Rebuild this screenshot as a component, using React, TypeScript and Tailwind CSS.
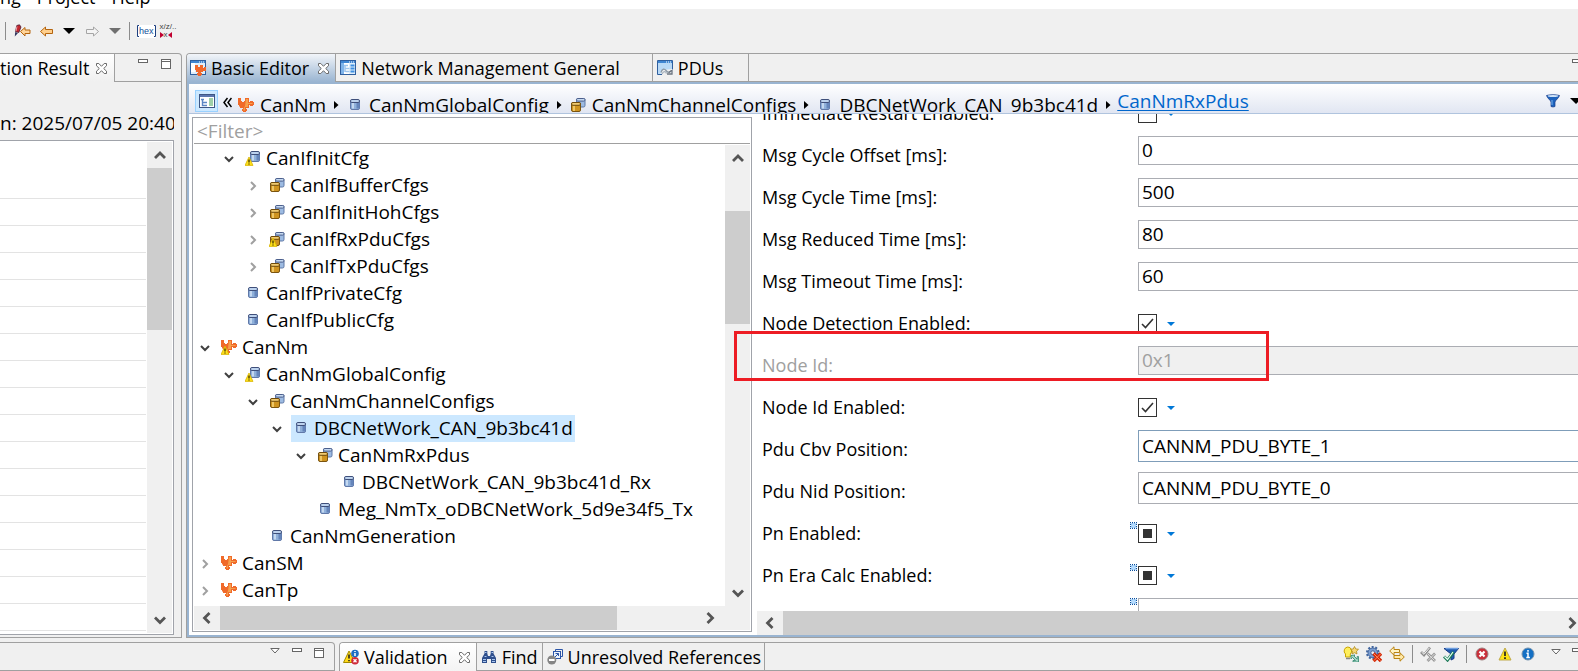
import { useEffect, useRef } from "react";
import type { ReactNode } from "react";

type Dir = "up" | "down" | "left" | "right";

/* ---------- icons ---------- */

function Svg({ w = 16, h = 16, children }: { w?: number; h?: number; children: ReactNode }) {
  return (
    <svg width={w} height={h} viewBox={`0 0 ${w} ${h}`} fill="none" className="shrink-0" aria-hidden="true">
      {children}
    </svg>
  );
}

const warnMark = (
  <g>
    <path d="M4 7 8 15.400H0Z" fill="#ffe11a" stroke="#d8b400" strokeWidth=".8" strokeLinejoin="round" />
    <path d="M4 9.500v3M4 13.400v1.100" stroke="#3a2f00" strokeWidth="1.300" />
  </g>
);

function Puzzle({ warn }: { warn?: boolean }) {
  return (
    <Svg>
      <path
        d="M0 1h3v3h1v1h2V4h1V1h4v4h1V4h3v1h1v3h-1v1h-3V8h-1v3H8v1h1v2H8v1H5v-1H4v-2h1v-1H2V9.500H1V8H0Z"
        fill="#f06a2a"
      />
      <path d="M8 2h2v4h4.500v1H10v3H7v3.500H5.500V12L7 9Z" fill="#f5a04c" />
      {warn && warnMark}
    </Svg>
  );
}

function Cylinder({ warn }: { warn?: boolean }) {
  const x = warn ? 2 : 0;
  return (
    <Svg>
      <g transform={`translate(${x} ${warn ? -2 : -1})`}>
        <rect x="3.500" y="4" width="9" height="9.500" rx="1.500" fill="#8fb0da" stroke="#6078a8" />
        <path d="M9.500 6.500h3v6h-3z" fill="#6585bb" />
        <path d="M5 6.500h2v6H5z" fill="#c4d8f0" />
        <rect x="3.500" y="3.500" width="9" height="3" rx="1.400" fill="#bcd2ee" stroke="#3f4f7a" />
      </g>
      {warn && warnMark}
    </Svg>
  );
}

function Cylinders({ warn }: { warn?: boolean }) {
  return (
    <Svg>
      <rect x="6.500" y="1.500" width="8.500" height="8.500" rx="1.500" fill="#9dbbe2" stroke="#5f78a6" />
      <rect x="6.500" y="1.500" width="8.500" height="2.600" rx="1.300" fill="#c4d8f0" stroke="#4c5f8c" />
      <rect x="1.500" y="5.500" width="9" height="9" rx="1.500" fill="#cf9420" stroke="#7a5410" />
      <path d="M3 8h2v6H3z" fill="#efc766" />
      <rect x="1.500" y="5.500" width="9" height="2.800" rx="1.400" fill="#f0cb72" stroke="#6f4a0a" />
      {warn && warnMark}
    </Svg>
  );
}

function WindowBase({ children }: { children: ReactNode }) {
  return (
    <Svg>
      <rect x=".5" y=".5" width="15" height="14" fill="#dfeefb" stroke="#2f5f9e" />
      <path d="M1 1h14v2H1z" fill="#3f86d2" />
      <path d="M9 2h1M11 2h1M13 2h1" stroke="#fff" />
      {children}
    </Svg>
  );
}

const BasicIcon = () => (
  <WindowBase>
    <path d="M1 3h4v9H1z" fill="#fff" />
    <path d="M5 5h3v2h2V5h3v3h1V7h2v4h-3v1h-2v1h1v2h-1v1H8v-1H7v-2h1v-1H6v-2H5Z" fill="#f0682c" />
  </WindowBase>
);

const FormIcon = () => (
  <WindowBase>
    <path d="M1 3h3v11H1z" fill="#7fb4ea" />
    <path d="M4 3h5v11H4z" fill="#fff" />
    <path d="M4 5.500h4M5.500 8.500h4M5.500 11.500h4M5 6v6" stroke="#9dc4ec" strokeWidth="1.500" />
    <path d="M10.500 5.500h4M10.500 8.500h4M10.500 11.500h4" stroke="#3f8fe0" strokeWidth="2" />
  </WindowBase>
);

const PduIcon = () => (
  <Svg>
    <path d="M.5.5h15v9M.5.5v14H5" fill="#dfeefb" stroke="#2f5f9e" />
    <path d="M1 1h14v2H1z" fill="#3f86d2" />
    <path d="M9 2h1M11 2h1M13 2h1" stroke="#fff" />
    <path d="M1 3h14v6L6 10 3 14H1Z" fill="#b9d9f6" />
    <path d="M4 12.500c1-4 3.500-4 5-2s3 2.500 5 .5" stroke="#8d99a5" strokeWidth="1.300" />
    <path d="M5 14c1.500-3 3.500-3 4.500-.5" stroke="#a5b1bd" strokeWidth="1.300" />
    <path d="M10 14h5v-4M12 12.500l2.500-2" stroke="#6b7480" strokeWidth="1.300" />
  </Svg>
);

const TreeToggleIcon = () => (
  <Svg>
    <rect x=".5" y="1.500" width="15" height="13" fill="#fff" stroke="#3e5684" />
    <path d="M1 2h14v2H1z" fill="#5b76ae" />
    <path d="M10 5h4v8h-4z" fill="#9fd0a8" />
    <path d="M2 6.500h3M4 9.500h4M5 12.500h3M3.500 7v5.500H5" stroke="#5b86c4" strokeWidth="1.400" />
  </Svg>
);

const CloseIcon = () => (
  <Svg w={11} h={11}>
    <path
      d="M.5.5h2.300L5.500 3.300 8.200.5h2.300v2.300L7.700 5.500l2.800 2.700v2.300H8.200L5.500 7.700l-2.700 2.800H.5V8.200l2.800-2.700L.5 2.800Z"
      stroke="#6a6a6a"
      fill="#fff"
    />
  </Svg>
);

const MinIcon = () => (
  <Svg w={10} h={4}>
    <rect x=".5" y=".5" width="9" height="3" fill="#fff" stroke="#666" />
  </Svg>
);

const MaxIcon = () => (
  <Svg w={10} h={10}>
    <rect x=".5" y=".5" width="9" height="9" fill="#fff" stroke="#666" />
    <path d="M0 2.500h10" stroke="#666" />
  </Svg>
);

const MenuTriangle = () => (
  <Svg w={10} h={6}>
    <path d="M.8.5h8.400L5 5Z" fill="#fff" stroke="#666" />
  </Svg>
);

const SolidTriangle = ({ gray }: { gray?: boolean }) => (
  <Svg w={12} h={6}>
    <path d="M0 0h12L6 6Z" fill={gray ? "#707070" : "#000"} />
  </Svg>
);

function Chevron({ dir }: { dir: Dir }) {
  const d = { up: "M2 10 7 5 12 10", down: "M2 4.500l5 5 5-5", left: "M9.500 2l-5 5 5 5", right: "M4.500 2l5 5-5 5" }[dir];
  return (
    <Svg w={14} h={14}>
      <path d={d} stroke="#555" strokeWidth="2.800" />
    </Svg>
  );
}

const FunnelIcon = () => (
  <Svg w={14} h={14}>
    <path d="M.5 1.500C3 .5 11 .5 13.500 1.500 13 4 9.500 6 9 8v4.500l-2 .5-2-.5V8C4.500 6 1 4 .5 1.500Z" fill="#1d63bd" stroke="#173a86" strokeWidth=".7" />
    <ellipse cx="7" cy="2" rx="5.300" ry="1" fill="#cfe2f7" />
    <path d="M6 6v5" stroke="#6fa8e6" strokeWidth="1.200" />
  </Svg>
);

const EditBackIcon = () => (
  <Svg w={17} h={14}>
    <path d="M2.800 1.500 5.500.8 7 3 4.800 8.500 1.500 7.500Z" fill="#c2262e" stroke="#4a1a30" strokeWidth=".8" />
    <path d="M3 2.500 2 7" stroke="#f0a0a8" />
    <path d="M1.200 8 4 9l-3.200 3.500Z" fill="#30355e" />
    <path d="M6.500 7.500 11 3.500V6h5v3.500h-5V12Z" fill="#ffd59a" stroke="#b4640f" />
  </Svg>
);

const Arrow = ({ gray, right }: { gray?: boolean; right?: boolean }) => (
  <Svg w={13} h={11}>
    <path
      d={right ? "M12.500 5.500 7.500 1v2.500h-7v4h7V10Z" : "M.5 5.500 5.500 1v2.500h7v4h-7V10Z"}
      fill={gray ? "#f4f4f4" : "#ffcf8c"}
      stroke={gray ? "#a5a5a5" : "#b4640f"}
    />
  </Svg>
);

const ProblemsIcon = () => (
  <Svg>
    <path d="M6 2 12 13.500H.5Z" fill="#ffd91a" stroke="#a38a00" strokeLinejoin="round" />
    <path d="M6 5.500v4M6 11v1.300" stroke="#222" strokeWidth="1.600" />
    <circle cx="12" cy="4.500" r="3.800" fill="#1d6fc4" />
    <path d="M12 2v1M12 4v3" stroke="#fff" strokeWidth="1.500" />
    <circle cx="12" cy="11.800" r="3.800" fill="#cf2b3a" />
    <path d="m10.500 10.300 3 3m0-3-3 3" stroke="#fff" strokeWidth="1.300" />
  </Svg>
);

const FindIcon = () => (
  <Svg>
    <path d="M3.500 2h2.800v2.500L7 7h2l.7-2.500V2h2.800v2.500L15 9v5h-5v-4H6v4H1V9l2.500-4.500Z" fill="#2f4f8c" />
    <path d="M2 10.500h3M11 10.500h3M2 12.500h3M11 12.500h3M4 3.500h1.500M10.500 3.500H12M3.500 7.500h2M10.500 7.500h2" stroke="#a9c6f0" />
  </Svg>
);

const UnresolvedIcon = () => (
  <Svg>
    <path d="M8.500 2.500v-2h7v7h-2" stroke="#2b55a8" />
    <rect x="6.500" y="2.500" width="7" height="7" fill="#eaf2fc" stroke="#2b55a8" />
    <path d="M8 8l3.500-3.500M8.500 4.500h3V7" stroke="#2b55a8" />
    <circle cx="4.800" cy="11" r="4.500" fill="#858585" />
    <path d="M2 11h5.600" stroke="#fff" strokeWidth="2" />
  </Svg>
);

const BulbIcon = () => (
  <Svg>
    <path d="M4.800 1a4 4 0 0 0-2.300 7v3h4.800V8A4 4 0 0 0 4.800 1Z" fill="#ffef5c" stroke="#c9a400" />
    <path d="M3 12.500h4" stroke="#888" strokeWidth="1.600" />
    <path d="m11.500.5 1.200 2.400 2.800.4-2 1.900.5 2.700-2.500-1.200L9 8l.5-2.800-2-1.900 2.800-.4Z" fill="#f7d774" stroke="#b08a18" strokeWidth=".8" />
    <path d="M8 9.500v3.500l1.500-1.500 3 3H10V16h5.500v-5.500h-1.300v2.700L11 10l1-1Z" fill="#a5d6c4" stroke="#3f8f78" strokeWidth=".9" />
  </Svg>
);

const GearErrorIcon = () => (
  <Svg>
    <circle cx="6.800" cy="6.800" r="5.800" stroke="#42669f" strokeWidth="2" strokeDasharray="2 1.640" />
    <circle cx="6.800" cy="6.800" r="4.800" fill="#7d9fd2" stroke="#42669f" />
    <circle cx="6.800" cy="6.800" r="2" fill="#f0f0f0" stroke="#42669f" />
    <path d="m7.500 7.500 7.500 7.500m0-7.500-7.500 7.500" stroke="#d42a08" strokeWidth="3.400" />
    <path d="m8 8 6.500 6.500m0-6.500-6.500 6.500" stroke="#ff8a60" strokeWidth="1" />
  </Svg>
);

const SwapIcon = () => (
  <Svg>
    <path d="M.7 5 5 .8v2.700h5.500v3H5v2.700Z" fill="#fff3c4" stroke="#b98312" />
    <path d="M15.300 11 11 6.800v2.700H5v3h6v2.700Z" fill="#ffe9a8" stroke="#b98312" />
  </Svg>
);

const ChecksIcon = () => (
  <Svg>
    <path d="m1 6 3 3 6-7.500" stroke="#8b8b8b" strokeWidth="2.600" />
    <path d="m1.500 6 2.500 2.300 5.500-6.500" stroke="#f4f4f4" strokeWidth="1" />
    <path d="m7.500 7.500 7.500 7.500m0-7.500-7.500 7.500" stroke="#9a9a9a" strokeWidth="2.800" />
    <path d="m8 8 6.500 6.500m0-6.500-6.500 6.500" stroke="#e4e4e4" strokeWidth=".9" />
  </Svg>
);

const FilterCheckIcon = () => (
  <Svg>
    <path d="M1 2.500h14.500L11 8v4.500L8 14V8Z" fill="#1f5cb0" stroke="#173a86" />
    <path d="M2.500 2.500h12.500" stroke="#6f9fe0" strokeWidth="1.400" />
    <path d="m1 10.500 3.500 3.500 6-8" stroke="#1c7a58" strokeWidth="3" />
    <path d="m1.500 10.500 3 3 5.500-7.500" stroke="#e6fff2" strokeWidth="1.200" />
  </Svg>
);

const ErrorIcon = () => (
  <Svg>
    <circle cx="8" cy="8" r="6" fill="#c9303b" stroke="#9b8080" />
    <path d="m5.500 5.500 5 5m0-5-5 5" stroke="#fff" strokeWidth="2.200" />
  </Svg>
);

const WarningIcon = () => (
  <Svg>
    <path d="M8 2 14 14H2Z" fill="#ffe414" stroke="#bfa94a" strokeLinejoin="round" />
    <path d="M8 5.500v4.500M8 11.300V13" stroke="#222" strokeWidth="1.700" />
  </Svg>
);

const InfoIcon = () => (
  <Svg>
    <circle cx="8" cy="8" r="6" fill="#1470c4" stroke="#7391ac" />
    <path d="M8 4v1.800M6.500 7.300H8v4M6.300 11.500h3.600" stroke="#fff" strokeWidth="1.500" />
  </Svg>
);

/* ---------- shared parts ---------- */

function IconButton({ label, className = "", children }: { label: string; className?: string; children: ReactNode }) {
  return (
    <button type="button" aria-label={label} className={`flex shrink-0 items-center justify-center ${className}`}>
      {children}
    </button>
  );
}

function ScrollV({ spacer, thumb }: { spacer: string; thumb: string }) {
  return (
    <div className="flex w-[25px] shrink-0 flex-col bg-[#f0f0f0]">
      <IconButton label="Scroll up" className="h-[26px]">
        <Chevron dir="up" />
      </IconButton>
      <div className={spacer} />
      <div className={`bg-[#cdcdcd] ${thumb}`} />
      <div className="flex-1" />
      <IconButton label="Scroll down" className="h-[26px]">
        <Chevron dir="down" />
      </IconButton>
    </div>
  );
}

function ScrollH({ thumb, end }: { thumb: string; end: string }) {
  return (
    <div className="flex h-6 shrink-0 bg-[#f0f0f0]">
      <IconButton label="Scroll left" className="w-[26px]">
        <Chevron dir="left" />
      </IconButton>
      <div className={`bg-[#cdcdcd] ${thumb}`} />
      <div className="flex-1" />
      <IconButton label="Scroll right" className={end}>
        <Chevron dir="right" />
      </IconButton>
    </div>
  );
}

/* ---------- tree ---------- */

type Kind = "module" | "item" | "list";
type Node = { d: number; kind: Kind; text: string; open?: boolean; warn?: boolean; selected?: boolean };

const nodes: Node[] = [
  { d: 1, kind: "item", text: "CanIfInitCfg", open: true, warn: true },
  { d: 2, kind: "list", text: "CanIfBufferCfgs", open: false },
  { d: 2, kind: "list", text: "CanIfInitHohCfgs", open: false },
  { d: 2, kind: "list", text: "CanIfRxPduCfgs", open: false, warn: true },
  { d: 2, kind: "list", text: "CanIfTxPduCfgs", open: false },
  { d: 1, kind: "item", text: "CanIfPrivateCfg" },
  { d: 1, kind: "item", text: "CanIfPublicCfg" },
  { d: 0, kind: "module", text: "CanNm", open: true, warn: true },
  { d: 1, kind: "item", text: "CanNmGlobalConfig", open: true, warn: true },
  { d: 2, kind: "list", text: "CanNmChannelConfigs", open: true },
  { d: 3, kind: "item", text: "DBCNetWork_CAN_9b3bc41d", open: true, selected: true },
  { d: 4, kind: "list", text: "CanNmRxPdus", open: true },
  { d: 5, kind: "item", text: "DBCNetWork_CAN_9b3bc41d_Rx" },
  { d: 4, kind: "item", text: "Meg_NmTx_oDBCNetWork_5d9e34f5_Tx" },
  { d: 2, kind: "item", text: "CanNmGeneration" },
  { d: 0, kind: "module", text: "CanSM", open: false },
  { d: 0, kind: "module", text: "CanTp", open: false },
];

function KindIcon({ kind, warn }: { kind: Kind; warn?: boolean }) {
  if (kind === "module") return <Puzzle warn={warn} />;
  if (kind === "list") return <Cylinders warn={warn} />;
  return <Cylinder warn={warn} />;
}

function TreeRow({ node }: { node: Node }) {
  return (
    <li
      role="treeitem"
      aria-expanded={node.open}
      aria-selected={!!node.selected}
      className="flex h-[27px] items-center"
      style={{ paddingLeft: node.d * 24 }}
    >
      <span className="flex w-[22px] shrink-0 justify-center">
        {node.open !== undefined && (
          <Svg w={10} h={10}>
            <path
              d={node.open ? "M1 3l4 4 4-4" : "M3 1l4 4-4 4"}
              stroke={node.open ? "#404040" : "#a0a0a0"}
              strokeWidth="2"
            />
          </Svg>
        )}
      </span>
      <span className={`ml-[3px] flex h-full items-center gap-1 pb-px pr-[2px] ${node.selected ? "bg-[#cce8ff]" : ""}`}>
        <span className="flex w-[19px] justify-center">
          <KindIcon kind={node.kind} warn={node.warn} />
        </span>
        {node.text}
      </span>
    </li>
  );
}

function TreePane() {
  return (
    <div className="flex w-[560px] shrink-0 flex-col border border-[#a0a3aa] bg-white px-px pb-px">
      <input
        aria-label="Filter"
        placeholder="<Filter>"
        className="h-[26px] shrink-0 border-b border-[#a0a0a0] px-[3px] text-[19px] outline-none placeholder:text-[#a0a0a0]"
      />
      <div className="flex min-h-0 flex-1 pt-px">
        <ul role="tree" className="min-w-0 flex-1 overflow-hidden whitespace-nowrap text-[19px]">
          {nodes.map((n) => (
            <TreeRow key={n.text} node={n} />
          ))}
        </ul>
        <ScrollV spacer="h-10" thumb="h-[113px]" />
      </div>
      <ScrollH thumb="w-[397px]" end="mr-[25px] w-[30px]" />
    </div>
  );
}

/* ---------- form ---------- */

type Field = {
  label: string;
  type: "text" | "select" | "check";
  value?: string;
  checked?: boolean;
  mixed?: boolean;
  marker?: boolean;
  disabled?: boolean;
  focus?: boolean;
};

const fields: Field[] = [
  { label: "Immediate Restart Enabled:", type: "check" },
  { label: "Msg Cycle Offset [ms]:", type: "text", value: "0" },
  { label: "Msg Cycle Time [ms]:", type: "text", value: "500" },
  { label: "Msg Reduced Time [ms]:", type: "text", value: "80" },
  { label: "Msg Timeout Time [ms]:", type: "text", value: "60" },
  { label: "Node Detection Enabled:", type: "check", checked: true },
  { label: "Node Id:", type: "text", value: "0x1", disabled: true },
  { label: "Node Id Enabled:", type: "check", checked: true },
  { label: "Pdu Cbv Position:", type: "select", value: "CANNM_PDU_BYTE_1", focus: true },
  { label: "Pdu Nid Position:", type: "select", value: "CANNM_PDU_BYTE_0" },
  { label: "Pn Enabled:", type: "check", mixed: true, marker: true },
  { label: "Pn Era Calc Enabled:", type: "check", mixed: true, marker: true },
  { label: "", type: "text", value: "", marker: true },
];

function CheckBox({ id, field }: { id: string; field: Field }) {
  const ref = useRef<HTMLInputElement>(null);
  useEffect(() => {
    if (ref.current) ref.current.indeterminate = !!field.mixed;
  }, [field.mixed]);
  return (
    <div className="mt-3 flex h-[19px] items-center gap-[9px]">
      <div className="relative h-[19px] w-[19px]">
        <input
          ref={ref}
          id={id}
          type="checkbox"
          defaultChecked={field.checked}
          className="block h-[19px] w-[19px] appearance-none border border-[#333] bg-white"
        />
        <span className="pointer-events-none absolute inset-0 flex items-center justify-center">
          {field.checked && (
            <Svg w={13} h={13}>
              <path d="M1 7l3.500 3.500L12 2" stroke="#333" strokeWidth="1.600" />
            </Svg>
          )}
          {field.mixed && <span className="h-[9px] w-[9px] bg-[#333]" />}
        </span>
      </div>
      <IconButton label="Value options" className="h-4 w-[10px]">
        <Svg w={8} h={4}>
          <path d="M0 0h8L4 4Z" fill="#0078d7" />
        </Svg>
      </IconButton>
    </div>
  );
}

function FormRow({ field, index }: { field: Field; index: number }) {
  const id = `field-${index}`;
  return (
    <div className="flex h-[42px] shrink-0">
      <label
        htmlFor={id}
        className={`flex w-[368px] shrink-0 items-center whitespace-nowrap ${field.disabled ? "text-[#a0a0a0]" : ""}`}
      >
        {field.label}
      </label>
      <span className={`flex w-2 shrink-0 items-start ${field.type === "check" ? "pt-[10px]" : "pt-[2px]"}`}>
        {field.marker && (
          <Svg w={7} h={7}>
            <rect x="1" y="1" width="5" height="5" fill="#b5dcff" />
            <path
              d="M0 .5h1M2 .5h1M4 .5h1M6 .5h1M0 6.500h1M2 6.500h1M4 6.500h1M6 6.500h1M.5 2v1M.5 4v1M6.500 2v1M6.500 4v1"
              stroke="#0a4f9e"
              strokeWidth="1.300"
            />
          </Svg>
        )}
      </span>
      {field.type === "check" && <CheckBox id={id} field={field} />}
      {field.type === "text" && (
        <input
          id={id}
          aria-label={field.label || "Value"}
          defaultValue={field.value}
          disabled={field.disabled}
          className="mt-[2px] h-[29px] min-w-0 flex-1 border border-r-0 border-[#abadb3] bg-white px-[3px] pb-px text-[19px] outline-none disabled:bg-[#f0f0f0] disabled:text-[#a0a0a0]"
        />
      )}
      {field.type === "select" && (
        <select
          id={id}
          defaultValue={field.value}
          className={`mt-[2px] h-8 min-w-0 flex-1 appearance-none border border-r-0 bg-white px-[3px] text-[19px] outline-none ${
            field.focus ? "border-[#7f9db9]" : "border-[#abadb3]"
          }`}
        >
          <option>CANNM_PDU_BYTE_0</option>
          <option>CANNM_PDU_BYTE_1</option>
        </select>
      )}
    </div>
  );
}

function FormPane() {
  return (
    <div className="relative flex min-w-0 flex-1 flex-col">
      <div className="flex min-h-0 flex-1 flex-col justify-start overflow-hidden pl-[10px]">
        <div className="-mt-[22px] flex flex-col">
          {fields.map((f, i) => (
            <FormRow key={i} field={f} index={i} />
          ))}
        </div>
      </div>
      <div className="pl-[5px]">
        <ScrollH thumb="w-[625px]" end="-mr-2 w-7" />
      </div>
      <div className="pointer-events-none absolute -left-[18px] top-[217px] h-[50px] w-[535px] border-[3px] border-[#ed1c24]" />
    </div>
  );
}

/* ---------- editor ---------- */

const crumbs: { kind: Kind; text: string }[] = [
  { kind: "module", text: "CanNm" },
  { kind: "item", text: "CanNmGlobalConfig" },
  { kind: "list", text: "CanNmChannelConfigs" },
  { kind: "item", text: "DBCNetWork_CAN_9b3bc41d" },
];

function EditorHeader() {
  return (
    <div className="flex h-[30px] shrink-0 overflow-hidden border-b border-[#b0c4de] bg-gradient-to-b from-white to-[#e1e6f2] pl-[6px]">
      <IconButton label="Toggle tree" className="mt-[6px] h-[22px] w-[23px] border border-[#99d1ff] bg-[#cce8ff]">
        <TreeToggleIcon />
      </IconButton>
      <IconButton label="More" className="mt-3 h-3 w-[18px]">
        <Svg w={9} h={11}>
          <path d="M4.500 1 1 5.500 4.500 10M8.500 1 5 5.500 8.500 10" stroke="#000" strokeWidth="1.500" />
        </Svg>
      </IconButton>
      <nav aria-label="Breadcrumb" className="flex h-[42px] items-center whitespace-nowrap text-[19px]">
        {crumbs.map((c) => (
          <span key={c.text} className="flex items-center">
            <span className="flex w-5 justify-center">
              <KindIcon kind={c.kind} />
            </span>
            <a href="#crumb" className="ml-1">
              {c.text}
            </a>
            <span className="ml-2 mr-[6px] flex">
              <Svg w={5} h={8}>
                <path d="M0 0v8l4.500-4Z" fill="#000" />
              </Svg>
            </span>
          </span>
        ))}
        <span className="flex h-[34px] items-center self-start">
          <a href="#current" className="text-[#0066cc] underline underline-offset-2">
            CanNmRxPdus
          </a>
        </span>
      </nav>
      <div className="ml-auto flex items-center gap-[10px] overflow-hidden pl-2 pt-1">
        <IconButton label="Filter view">
          <FunnelIcon />
        </IconButton>
        <IconButton label="View menu" className="-mr-1">
          <SolidTriangle />
        </IconButton>
      </div>
    </div>
  );
}

function Tab({ icon, text, className }: { icon: ReactNode; text: string; className: string }) {
  return (
    <button type="button" role="tab" className={`flex shrink-0 items-center gap-[5px] whitespace-nowrap ${className}`}>
      {icon}
      {text}
    </button>
  );
}

function Editor() {
  return (
    <main className="flex min-w-0 flex-1 flex-col overflow-hidden rounded-tl border border-r-0 border-[#a0a0a0]">
      <div role="tablist" className="flex h-7 shrink-0 items-stretch">
        <div className="flex shrink-0 items-center border-r border-[#a0a0a0] bg-gradient-to-b from-[#f2f5f9] to-[#99b4d1]">
          <Tab icon={<BasicIcon />} text="Basic Editor" className="pl-[3px]" />
          <IconButton label="Close Basic Editor" className="ml-[9px] mr-[6px]">
            <CloseIcon />
          </IconButton>
        </div>
        <Tab icon={<FormIcon />} text="Network Management General" className="border-b border-r border-[#a0a0a0] pl-1 pr-8" />
        <Tab icon={<PduIcon />} text="PDUs" className="border-b border-r border-[#a0a0a0] pl-1 pr-[25px]" />
        <div className="flex min-w-0 flex-1 items-start justify-end overflow-hidden border-b border-[#a0a0a0]">
          <IconButton label="Minimize" className="-mr-1 mt-[5px]">
            <MinIcon />
          </IconButton>
        </div>
      </div>
      <div className="flex min-h-0 flex-1 flex-col border-y-2 border-l-2 border-[#99b4d1] bg-white">
        <EditorHeader />
        <div className="flex min-h-0 flex-1">
          <div className="flex shrink-0 pb-[3px] pl-[3px] pt-[3px]">
            <TreePane />
          </div>
          <FormPane />
        </div>
      </div>
    </main>
  );
}

/* ---------- surrounding panels ---------- */

function ToolBar() {
  return (
    <div className="flex h-11 shrink-0 items-center">
      <div className="ml-[5px] h-[18px] w-px bg-[#8c8c8c]" />
      <IconButton label="Last edit location" className="ml-2">
        <EditBackIcon />
      </IconButton>
      <IconButton label="Back" className="ml-[9px]">
        <Arrow />
      </IconButton>
      <IconButton label="Back history" className="ml-[10px]">
        <SolidTriangle />
      </IconButton>
      <IconButton label="Forward" className="ml-[11px]">
        <Arrow gray right />
      </IconButton>
      <IconButton label="Forward history" className="ml-[10px]">
        <SolidTriangle gray />
      </IconButton>
      <div className="ml-2 h-[18px] w-px bg-[#8c8c8c]" />
      <button
        type="button"
        aria-label="Hexadecimal display"
        className="ml-[7px] flex h-[13px] items-center bg-white font-['Liberation_Sans'] text-[9px] leading-3 text-[#11509a]"
      >
        <Svg w={2} h={12}>
          <path d="M2 .5H.5v11H2" stroke="#1d3f80" />
        </Svg>
        hex
        <Svg w={2} h={12}>
          <path d="M0 .5h1.500v11H0" stroke="#1d3f80" />
        </Svg>
      </button>
      <button
        type="button"
        className="ml-1 flex flex-col items-start font-['Liberation_Sans'] text-[8px] leading-[8px] text-[#444]"
      >
        <span>x/z/..</span>
        <span className="flex items-center">
          <Svg w={4} h={6}>
            <path d="M0 0v6l4-3Z" fill="#c00030" />
          </Svg>
          x
          <Svg w={4} h={6}>
            <path d="M4 0v6L0 3Z" fill="#c00030" />
          </Svg>
        </span>
      </button>
    </div>
  );
}

function ResultPanel() {
  return (
    <aside className="flex w-[182px] shrink-0 flex-col overflow-hidden rounded-tr border border-l-0 border-[#a0a0a0]">
      <div className="flex h-7 shrink-0">
        <div className="flex w-[115px] items-center justify-between border-r border-[#a0a0a0] bg-gradient-to-b from-white to-[#f0f0f0] pr-[7px]">
          <button type="button" className="whitespace-nowrap">
            tion Result
          </button>
          <IconButton label="Close Result">
            <CloseIcon />
          </IconButton>
        </div>
        <div className="flex flex-1 items-start justify-end gap-[13px] border-b border-[#a0a0a0] pr-[10px] pt-[5px]">
          <IconButton label="Minimize">
            <MinIcon />
          </IconButton>
          <IconButton label="Maximize">
            <MaxIcon />
          </IconButton>
        </div>
      </div>
      <div className="mr-[7px] flex h-[58px] shrink-0 items-end overflow-hidden whitespace-nowrap pb-[5px] text-[19px]">
        n: 2025/07/05 20:40
      </div>
      <div className="mb-[2px] mr-[7px] flex min-h-0 flex-1 border border-l-0 border-[#a0a3aa] bg-white py-px pr-px">
        <ul className="mr-px flex-1 overflow-hidden pt-[30px]">
          {Array.from({ length: 17 }, (_, i) => (
            <li key={i} className="h-[27px] border-b border-[#e3e3e3]" />
          ))}
        </ul>
        <ScrollV spacer="h-0" thumb="h-[162px]" />
      </div>
    </aside>
  );
}

const Divider = () => <div className="h-[18px] w-px shrink-0 bg-[#8c8c8c]" />;

function BottomBar() {
  return (
    <div className="flex h-[29px] shrink-0 gap-1">
      <div className="flex w-[335px] shrink-0 items-start justify-end gap-3 rounded-tr border border-l-0 border-[#a0a0a0] pr-[10px] pt-[5px]">
        <IconButton label="View menu">
          <MenuTriangle />
        </IconButton>
        <IconButton label="Minimize">
          <MinIcon />
        </IconButton>
        <IconButton label="Maximize">
          <MaxIcon />
        </IconButton>
      </div>
      <div className="flex min-w-0 flex-1 overflow-hidden rounded-tl border-l border-t border-[#a0a0a0]">
        <div className="flex shrink-0 items-center border-r border-[#a0a0a0] bg-gradient-to-b from-white to-[#f4f4f4]">
          <Tab icon={<ProblemsIcon />} text="Validation" className="pl-[3px]" />
          <IconButton label="Close Validation" className="ml-[11px] mr-[6px]">
            <CloseIcon />
          </IconButton>
        </div>
        <Tab icon={<FindIcon />} text="Find" className="border-b border-r border-[#a0a0a0] pl-1 pr-1" />
        <Tab icon={<UnresolvedIcon />} text="Unresolved References" className="border-b border-r border-[#a0a0a0] pl-1 pr-[3px]" />
        <div className="flex min-w-0 flex-1 items-center justify-end gap-[7px] overflow-hidden border-b border-[#a0a0a0] pb-[5px]">
          <IconButton label="Suggestions">
            <BulbIcon />
          </IconButton>
          <IconButton label="Remove solving actions">
            <GearErrorIcon />
          </IconButton>
          <IconButton label="Synchronize">
            <SwapIcon />
          </IconButton>
          <Divider />
          <IconButton label="Toggle checks">
            <ChecksIcon />
          </IconButton>
          <IconButton label="Filter checks">
            <FilterCheckIcon />
          </IconButton>
          <Divider />
          <IconButton label="Errors">
            <ErrorIcon />
          </IconButton>
          <IconButton label="Warnings">
            <WarningIcon />
          </IconButton>
          <IconButton label="Information">
            <InfoIcon />
          </IconButton>
          <IconButton label="View menu" className="mb-1 ml-2">
            <MenuTriangle />
          </IconButton>
          <IconButton label="Minimize" className="-mr-1 mb-2 ml-1">
            <MinIcon />
          </IconButton>
        </div>
      </div>
    </div>
  );
}

export default function App() {
  return (
    <div className="flex h-screen flex-col overflow-hidden bg-[#f0f0f0] font-['Open_Sans','Noto_Sans_CJK_SC',sans-serif] text-[18px] leading-6 text-black">
      <div className="flex h-[9px] shrink-0 items-end overflow-hidden bg-white">
        <div className="flex gap-4 whitespace-pre">
          <button type="button">ng</button>
          <button type="button">Project</button>
          <button type="button">Help</button>
        </div>
      </div>
      <ToolBar />
      <div className="flex min-h-0 flex-1 gap-1">
        <ResultPanel />
        <Editor />
      </div>
      <div className="h-1 shrink-0" />
      <BottomBar />
    </div>
  );
}
